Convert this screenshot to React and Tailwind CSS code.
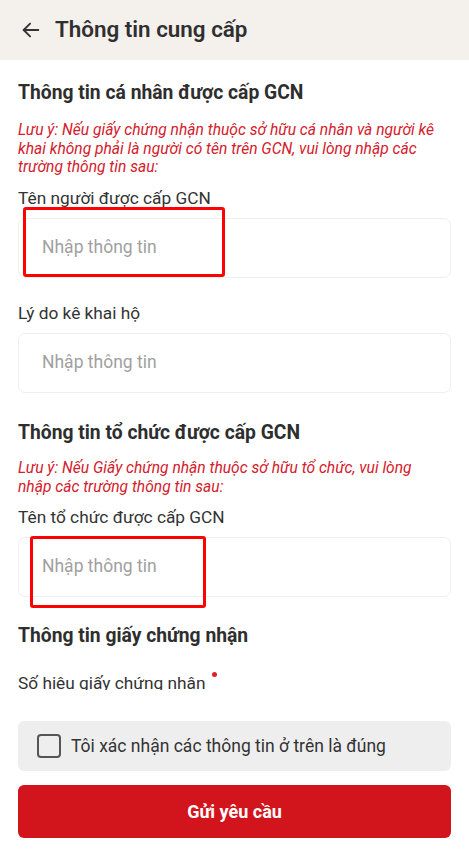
import React from "react";

const font = { fontFamily: "Roboto, 'Noto Sans', Arial, sans-serif" };

function Field({ label, highlight }) {
  return (
    <div className="flex flex-col">
      <div className="text-[17.3px] leading-5 text-[#333]">{label}</div>
      <div className="relative mt-[10px]">
        <div className="flex h-[60px] items-center rounded-[7px] border border-[#efefef] bg-white pl-[23px] text-[17.5px] text-[#a0a0a0]">
          Nhập thông tin
        </div>
        {highlight}
      </div>
    </div>
  );
}

function Heading({ children }) {
  return <h2 className="text-[19.3px] font-bold leading-6 text-[#2e2e2e]">{children}</h2>;
}

export default function App() {
  return (
    <div className="flex h-[868px] w-[469px] flex-col overflow-hidden bg-white" style={font}>
      {/* top bar */}
      <header className="flex h-[60px] shrink-0 items-center bg-[#f4f0ec] pl-[20px]">
        <svg width="22" height="22" viewBox="0 0 24 24" fill="none" stroke="#333" strokeWidth="2" strokeLinecap="round" strokeLinejoin="round">
          <path d="M20 12H4" />
          <path d="M11 5l-7 7 7 7" />
        </svg>
        <h1 className="ml-[13px] text-[22.4px] font-semibold text-[#2f2f2f]">Thông tin cung cấp</h1>
      </header>

      {/* scrolling form */}
      <main className="h-[630px] shrink-0 overflow-hidden px-[18px] pt-[21px]">
        <Heading>Thông tin cá nhân được cấp GCN</Heading>
        <p className="mt-[16px] text-[15.6px] italic leading-[18.5px] text-[#d4202c]">
          Lưu ý: Nếu giấy chứng nhận thuộc sở hữu cá nhân và người kê khai không phải là người có tên trên GCN, vui lòng nhập các trường thông tin sau:
        </p>
        <div className="mt-[11px]">
          <Field
            label="Tên người được cấp GCN"
            highlight={<div className="absolute left-[5px] top-[-11px] h-[70px] w-[202px] rounded-[3px] border-[3.5px] border-[#ff0000]" />}
          />
        </div>
        <div className="mt-[25px]">
          <Field label="Lý do kê khai hộ" />
        </div>

        <div className="mt-[28px]">
          <Heading>Thông tin tổ chức được cấp GCN</Heading>
        </div>
        <p className="mt-[14px] text-[15.6px] italic leading-[19px] text-[#d4202c]">
          Lưu ý: Nếu Giấy chứng nhận thuộc sở hữu tổ chức, vui lòng
          <br />
          nhập các trường thông tin sau:
        </p>
        <div className="mt-[10px]">
          <Field
            label="Tên tổ chức được cấp GCN"
            highlight={<div className="absolute left-[12px] top-[-1px] h-[72px] w-[176px] rounded-[3px] border-[3.5px] border-[#ff0000]" />}
          />
        </div>

        <div className="mt-[27px]">
          <Heading>Thông tin giấy chứng nhận</Heading>
        </div>
        <div className="mt-[25px] flex items-start text-[17.3px] leading-5 text-[#333]">
          <span>Số hiệu giấy chứng nhận</span>
          <span className="ml-[6px] mt-[-1px] h-[5px] w-[5px] rounded-full bg-[#e0202e]" />
        </div>
      </main>

      {/* footer actions */}
      <footer className="flex flex-col gap-[14px] bg-white px-[18px] pt-[31px]">
        <label className="flex h-[50px] items-center rounded-[6px] bg-[#eeeeee] pl-[19px]">
          <span className="h-[24px] w-[24px] rounded-[4px] border-2 border-[#555]" />
          <span className="ml-[10px] text-[17.5px] text-[#333]">Tôi xác nhận các thông tin ở trên là đúng</span>
        </label>
        <button className="flex h-[53px] items-center justify-center rounded-[6px] bg-[#d2141c] text-[18px] font-bold text-white">
          Gửi yêu cầu
        </button>
      </footer>
    </div>
  );
}
